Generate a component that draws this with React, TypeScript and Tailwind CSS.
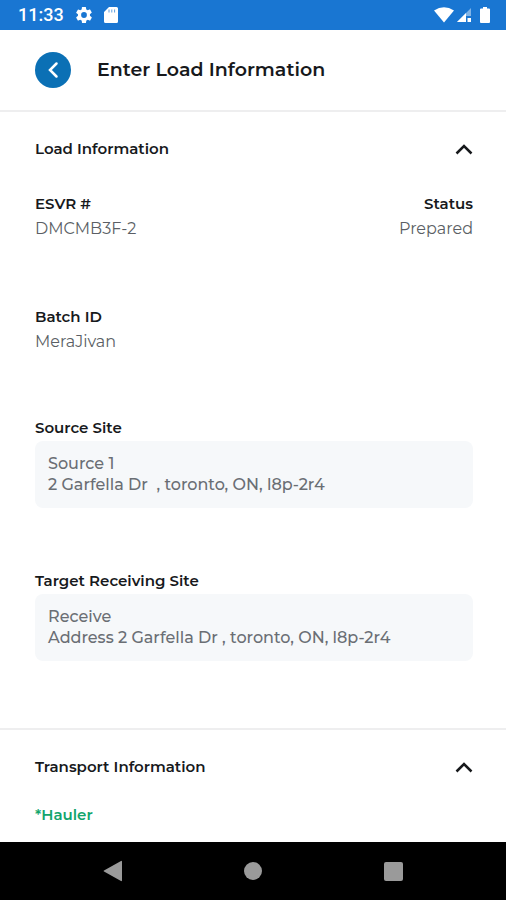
import { useState, type ReactNode } from "react";

function StatusBar() {
  return (
    <div className="flex h-[30px] items-center justify-between bg-[#1976d2] pr-4 pl-[18px] text-white">
      <div className="flex items-center">
        <span className="w-[58px] font-['Roboto',sans-serif] text-lg leading-6 font-medium">11:33</span>
        <svg viewBox="2 2 20 20" className="h-4 w-4" fill="currentColor" aria-hidden="true">
          <path d="M19.4 13a7.500 7.500 0 0 0 0-2l2.100-1.700a.5.5 0 0 0 .1-.6l-2-3.500a.5.5 0 0 0-.6-.2l-2.500 1a7.300 7.300 0 0 0-1.700-1L14.400 2.400a.5.500 0 0 0-.5-.4h-4a.5.5 0 0 0-.5.4L9.100 5.100a7.700 7.700 0 0 0-1.700 1l-2.500-1a.5.5 0 0 0-.6.200l-2 3.500a.5.5 0 0 0 .1.600L4.500 11a8 8 0 0 0 0 2l-2.100 1.700a.5.5 0 0 0-.1.600l2 3.500c.1.200.4.300.6.200l2.500-1c.5.400 1.100.700 1.700 1l.4 2.600c0 .2.200.4.500.4h4c.200 0 .500-.2.500-.4l.4-2.600c.6-.3 1.200-.6 1.700-1l2.500 1c.2.100.5 0 .6-.2l2-3.500a.5.5 0 0 0-.1-.6zM12 15.600a3.600 3.600 0 1 1 0-7.200 3.600 3.600 0 0 1 0 7.200z" />
        </svg>
        <svg viewBox="0 0 14 16" className="ml-3 h-4 w-[14px]" aria-hidden="true">
          <path d="M5 0h7.500A1.500 1.500 0 0 1 14 1.500v13a1.500 1.500 0 0 1-1.500 1.500h-11A1.500 1.500 0 0 1 0 14.500V5z" fill="white" />
          <path d="M5 2.500v3M7.800 2.500v3M10.600 2.500v3" stroke="#1976d2" strokeWidth="1" strokeOpacity=".7" />
        </svg>
      </div>
      <div className="flex items-center">
        <svg viewBox="0 0 20 16" className="h-4 w-5" fill="currentColor" aria-hidden="true">
          <path d="M0 3.500Q10-3 20 3.500L10 15.500z" />
        </svg>
        <svg viewBox="0 0 16 16" className="ml-[2px] h-4 w-4" aria-hidden="true">
          <path d="M15 1v8h-5v6H1z" fill="white" fillOpacity=".45" />
          <path d="M10 6v9H1z" fill="white" />
          <path d="M11.500 11h3.500v4h-3.500z" fill="white" />
        </svg>
        <svg viewBox="0 0 10 16" className="ml-2 h-4 w-[10px]" fill="currentColor" aria-hidden="true">
          <path d="M3 0h4v1.500h2a1 1 0 0 1 1 1V15a1 1 0 0 1-1 1H1a1 1 0 0 1-1-1V2.500a1 1 0 0 1 1-1h2z" />
        </svg>
      </div>
    </div>
  );
}

function Section({ title, children }: { title: string; children: ReactNode }) {
  const [open, setOpen] = useState(true);
  return (
    <section className="pt-[25px] pr-[33px] pl-[35px]">
      <h2 className="text-[15px] leading-6 font-semibold">
        <button
          type="button"
          aria-expanded={open}
          onClick={() => setOpen(!open)}
          className="flex w-full items-center justify-between text-left"
        >
          {title}
          <svg
            viewBox="0 0 18 12"
            className={open ? "h-3 w-[18px]" : "h-3 w-[18px] rotate-180"}
            fill="none"
            stroke="currentColor"
            strokeWidth="2.500"
            aria-hidden="true"
          >
            <path d="M1.500 10.500 9 3l7.500 7.500" />
          </svg>
        </button>
      </h2>
      {open && children}
    </section>
  );
}

function Field({ label, value }: { label: string; value: string }) {
  return (
    <div>
      <dt className="text-[15px] leading-6 font-semibold">{label}</dt>
      <dd className="text-base leading-[26px] text-[#5b5f65]">{value}</dd>
    </div>
  );
}

function SiteField({ label, name, address }: { label: string; name: string; address: string }) {
  return (
    <div>
      <dt className="text-[15px] leading-6 font-semibold">{label}</dt>
      <dd className="mt-px rounded-lg bg-[#f6f8fa] px-[13px] pt-3 pb-[13px] text-base leading-[21px] font-medium whitespace-pre-wrap text-[#6a6e74]">
        <p>{name}</p>
        <p>{address}</p>
      </dd>
    </div>
  );
}

function NavigationBar() {
  return (
    <nav aria-label="System" className="flex h-[58px] items-center justify-center gap-[116px] bg-black text-[#9a9a9a]">
      <button type="button" aria-label="Back" className="flex h-6 w-6 items-center justify-center">
        <svg viewBox="0 0 20 22" className="h-[22px] w-5" fill="currentColor">
          <path d="M19 1.500v19a.6.6 0 0 1-1 .5L1 11.600a.7.7 0 0 1 0-1.200L18 1a.6.600 0 0 1 1 .5z" />
        </svg>
      </button>
      <button type="button" aria-label="Home" className="flex h-6 w-6 items-center justify-center">
        <span className="h-[18px] w-[18px] rounded-full bg-current" />
      </button>
      <button type="button" aria-label="Recent apps" className="flex h-6 w-6 items-center justify-center">
        <span className="h-[19px] w-[19px] rounded-xs bg-current" />
      </button>
    </nav>
  );
}

export default function App() {
  return (
    <div className="flex min-h-screen flex-col bg-white font-['Montserrat','Inter',sans-serif] text-[#17191c]">
      <StatusBar />
      <header className="flex h-[82px] items-center gap-[26px] border-b-2 border-[#eeeeef] px-[35px]">
        <button
          type="button"
          aria-label="Go back"
          className="flex h-9 w-9 items-center justify-center rounded-full bg-[#0b70b5] text-white"
        >
          <svg viewBox="0 0 12 18" className="h-[18px] w-3" fill="none" stroke="currentColor" strokeWidth="2.500" strokeLinecap="round" aria-hidden="true">
            <path d="M9.500 2.500 3 9l6.500 6.500" />
          </svg>
        </button>
        <h1 className="text-[19px] leading-6 font-semibold">Enter Load Information</h1>
      </header>
      <main className="flex-1">
        <Section title="Load Information">
          <dl className="flex flex-col gap-[61px] pt-[31px] pb-[67px]">
            <div className="flex justify-between pb-[2px]">
              <Field label="ESVR #" value="DMCMB3F-2" />
              <div className="text-right">
                <Field label="Status" value="Prepared" />
              </div>
            </div>
            <Field label="Batch ID" value="MeraJivan" />
            <SiteField label="Source Site" name="Source 1" address="2 Garfella Dr  , toronto, ON, l8p-2r4" />
            <SiteField label="Target Receiving Site" name="Receive" address="Address 2 Garfella Dr , toronto, ON, l8p-2r4" />
          </dl>
        </Section>
        <hr className="border-t-2 border-[#eeeeef]" />
        <Section title="Transport Information">
          <p className="pt-6 text-[15px] leading-6 font-semibold text-[#12a56c]">*Hauler</p>
        </Section>
      </main>
      <NavigationBar />
    </div>
  );
}
